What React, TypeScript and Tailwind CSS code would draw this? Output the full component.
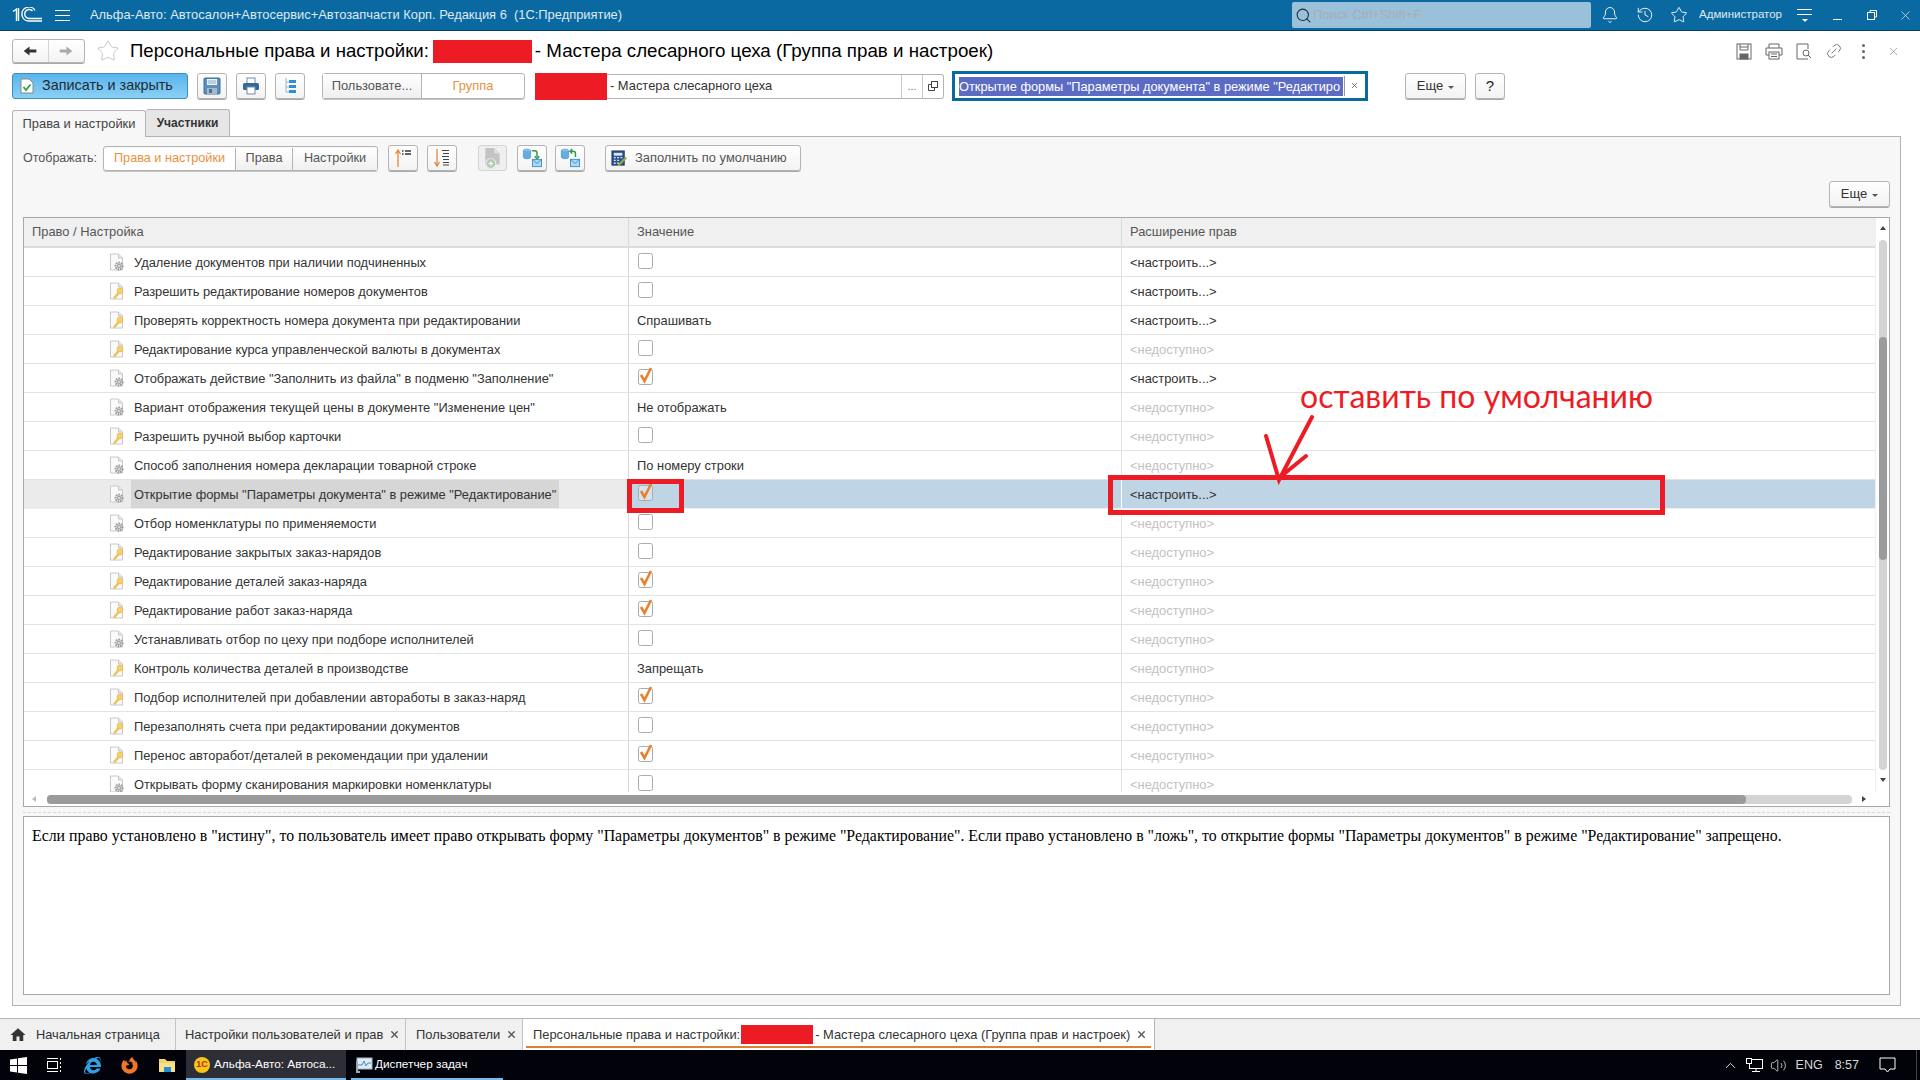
import { Bell, ChevronUp, History, Link2, Search, Star, Volume2, X } from "lucide-react";
import { FaFirefoxBrowser, FaInternetExplorer } from "react-icons/fa";
import { MdHome } from "react-icons/md";

type Row = { label: string; icon: "gear" | "key"; value: boolean | string; open: boolean };

const rows: Row[] = [
  { label: "Удаление документов при наличии подчиненных", icon: "gear", value: false, open: true },
  { label: "Разрешить редактирование номеров документов", icon: "key", value: false, open: true },
  { label: "Проверять корректность номера документа при редактировании", icon: "key", value: "Спрашивать", open: true },
  { label: "Редактирование курса управленческой валюты в документах", icon: "key", value: false, open: false },
  { label: 'Отображать действие "Заполнить из файла" в подменю "Заполнение"', icon: "gear", value: true, open: true },
  { label: 'Вариант отображения текущей цены в документе "Изменение цен"', icon: "gear", value: "Не отображать", open: false },
  { label: "Разрешить ручной выбор карточки", icon: "key", value: false, open: false },
  { label: "Способ заполнения номера декларации товарной строке", icon: "gear", value: "По номеру строки", open: false },
  { label: 'Открытие формы "Параметры документа" в режиме "Редактирование"', icon: "gear", value: true, open: true },
  { label: "Отбор номенклатуры по применяемости", icon: "gear", value: false, open: false },
  { label: "Редактирование закрытых заказ-нарядов", icon: "key", value: false, open: false },
  { label: "Редактирование деталей заказ-наряда", icon: "key", value: true, open: false },
  { label: "Редактирование работ заказ-наряда", icon: "key", value: true, open: false },
  { label: "Устанавливать отбор по цеху при подборе исполнителей", icon: "gear", value: false, open: false },
  { label: "Контроль количества деталей в производстве", icon: "key", value: "Запрещать", open: false },
  { label: "Подбор исполнителей при добавлении автоработы в заказ-наряд", icon: "key", value: true, open: false },
  { label: "Перезаполнять счета при редактировании документов", icon: "key", value: false, open: false },
  { label: "Перенос авторабот/деталей в рекомендации при удалении", icon: "key", value: true, open: false },
  { label: "Открывать форму сканирования маркировки номенклатуры", icon: "gear", value: false, open: false },
];

const btn =
  "flex items-center justify-center border border-[#b4b4b4] rounded-[3px] bg-linear-to-b from-white to-[#f3f3f3] shadow-[0_1px_0_#a8a8a8]";

function Logo1C() {
  return (
    <svg width="31" height="16" viewBox="0 0 31 16" fill="none" stroke="white" strokeWidth="1.4">
      <path d="M1 4.5 L4.5 2 V14 M6.5 1 V14" />
      <path d="M30 11.5 H17 A4.5 4.5 0 1 1 20.5 4" />
      <path d="M30 14 H17 A7 7 0 1 1 23 3.5" />
    </svg>
  );
}

function DocIcon({ kind }: { kind: "gear" | "key" }) {
  return (
    <svg width="17" height="18" viewBox="0 0 17 18" className="shrink-0">
      <path d="M1.5 1 H9.5 L13.5 5 V17 H1.5 Z" fill="#fafafa" stroke="#c8c8c8" />
      <path d="M9.5 1 V5 H13.5" fill="#e6e6e6" stroke="#c8c8c8" />
      {kind === "gear" ? (
        <>
          <circle cx="10" cy="13" r="3.4" fill="none" stroke="#9a9a9a" strokeWidth="2.2" strokeDasharray="1.6 0.9" />
          <circle cx="10" cy="13" r="2.2" fill="#a8a8a8" />
          <circle cx="10" cy="13" r="0.9" fill="#eee" />
        </>
      ) : (
        <>
          <path d="M5 16.5 L10 10.5" stroke="#eec25a" strokeWidth="2.6" />
          <circle cx="11" cy="9" r="3" fill="#f4cf6c" stroke="#e3b341" strokeWidth="0.6" />
        </>
      )}
    </svg>
  );
}

function Check({ on }: { on: boolean }) {
  return (
    <svg width="18" height="22" viewBox="0 0 18 22" className="shrink-0">
      <rect x="0.5" y="5.5" width="14" height="15" rx="2" fill="#fff" fillOpacity={on ? 0.35 : 1} stroke="#ababab" />
      {on && <path d="M3 11 L6.5 17 L13 4" fill="none" stroke="#e8812d" strokeWidth="2.6" />}
    </svg>
  );
}

function Caret() {
  return <span className="ml-[5px] mt-[2px] w-0 h-0 border-x-[3px] border-x-transparent border-t-[3px] border-t-[#555]" />;
}

function RedBlock({ w }: { w: string }) {
  return <span className={`bg-[#ed1c24] shrink-0 ${w}`} />;
}

function GridRow({ row, selected }: { row: Row; selected: boolean }) {
  return (
    <div className={`flex h-[29px] border-b ${selected ? "border-[#eeeeee]" : "border-[#e3e3e3]"} shrink-0`}>
      <div className={`w-[605px] shrink-0 flex items-center pl-[85px] border-r border-[#d9d9d9] ${selected ? "bg-[#ebebeb]" : ""}`}>
        <DocIcon kind={row.icon} />
        <span className={`ml-[7px] pl-[3px] pr-[3px] pt-px h-full flex items-center -translate-x-[2px] text-[12.85px] ${selected ? "bg-[#d6d6d6]" : ""}`}>{row.label}</span>
      </div>
      <div className={`w-[493px] shrink-0 flex items-center pl-[8px] pt-px ${selected ? "bg-[#bfd5e5] border-r border-white" : "border-r border-[#e3e3e3]"}`}>
        {typeof row.value === "string" ? row.value : <span className="pl-px -mt-[7px]"><Check on={row.value} /></span>}
      </div>
      <div className={`flex-1 flex items-center pl-[8px] pt-px ${selected ? "bg-[#bfd5e5]" : ""} ${row.open ? "text-[#333]" : "text-[#c4c0c3]"}`}>
        {row.open ? "<настроить...>" : "<недоступно>"}
      </div>
    </div>
  );
}

function VScroll() {
  return (
    <div className="w-[14px] shrink-0 flex flex-col items-center border-l border-[#f0f0f0]">
      <span className="mt-[8px] w-0 h-0 border-x-[3px] border-x-transparent border-b-[4px] border-b-[#444]" />
      <div className="mt-[10px] w-[8px] h-[530px] bg-[#d4d4d4] rounded-[4px] flex flex-col">
        <div className="mt-[97px] h-[223px] bg-[#9b9b9b] rounded-[4px]" />
      </div>
      <span className="mt-[8px] w-0 h-0 border-x-[3px] border-x-transparent border-t-[4px] border-t-[#444]" />
    </div>
  );
}

function HScroll() {
  return (
    <div className="h-[14px] flex items-center shrink-0">
      <span className="ml-[8px] w-0 h-0 border-y-[3px] border-y-transparent border-r-[4px] border-r-[#bbb]" />
      <div className="ml-[11px] w-[1805px] h-[9px] bg-[#d4d4d4] rounded-[4px]">
        <div className="w-[1699px] h-full bg-[#9b9b9b] rounded-[4px]" />
      </div>
      <span className="ml-[10px] w-0 h-0 border-y-[3px] border-y-transparent border-l-[4px] border-l-[#444]" />
    </div>
  );
}

function FloppyBlue() {
  return (
    <svg width="18" height="18" viewBox="0 0 18 18">
      <rect x="1" y="1" width="16" height="16" rx="1" fill="#5d8fbd" stroke="#3d6f9f" />
      <rect x="4" y="2" width="10" height="6" fill="#eef3f8" />
      <path d="M5 4 H13 M5 6 H13" stroke="#8aa9c6" />
      <rect x="4" y="11" width="10" height="6" fill="#a9b9c8" />
      <rect x="6" y="12" width="3" height="4" fill="#4c6f93" />
    </svg>
  );
}

function PrinterBlue() {
  return (
    <svg width="18" height="18" viewBox="0 0 18 18">
      <rect x="5" y="1" width="8" height="6" fill="#fff" stroke="#6f8da8" />
      <rect x="1" y="6" width="16" height="7" rx="1.5" fill="#356a96" />
      <rect x="5" y="10" width="8" height="7" fill="#fff" stroke="#6f8da8" />
    </svg>
  );
}

function TreeList() {
  return (
    <svg width="16" height="18" viewBox="0 0 16 18">
      <path d="M4 1 V15 M4 5 H7 M4 10 H7 M4 15 H7" stroke="#9fb3bf" fill="none" />
      <rect x="7" y="3" width="7" height="3" fill="#2f8fd0" />
      <rect x="7" y="8" width="7" height="3" fill="#2f8fd0" />
      <rect x="7" y="13" width="7" height="3" fill="#2f8fd0" />
    </svg>
  );
}

function SortIcon({ down }: { down: boolean }) {
  return (
    <svg width="18" height="20" viewBox="0 0 18 20">
      {down ? (
        <path d="M4 1 V17 M1.5 14 L4 18 L6.5 14" stroke="#e8853a" fill="none" strokeWidth="1.3" />
      ) : (
        <path d="M4 19 V3 M1.5 6 L4 2 L6.5 6" stroke="#e8853a" fill="none" strokeWidth="1.3" />
      )}
      {down ? (
        <path d="M9 2.5 H16 M10 5.5 H16 M9 8.5 H16 M10 11.5 H16 M10 14.5 H16 M10 17 H16" stroke="#444" strokeWidth="1.2" />
      ) : (
        <path d="M8 3 H9.5 M11 3 H17 M8 6 H9.5 M11 6 H17" stroke="#333" strokeWidth="1.4" />
      )}
    </svg>
  );
}

function DataMail({ back }: { back: boolean }) {
  return (
    <svg width="20" height="20" viewBox="0 0 22 22">
      <ellipse cx="5.5" cy="3" rx="4" ry="1.8" fill="#9ccff0" stroke="#3d8fc9" strokeWidth="0.7" />
      <path d="M1.5 3 V10 A4 1.8 0 0 0 9.5 10 V3" fill="#62ade3" stroke="#3d8fc9" strokeWidth="0.7" />
      <path d={back ? "M17 10 V6 A2.5 2.5 0 0 0 14.5 3.5 H11" : "M11 3 H14 A2.5 2.5 0 0 1 16.5 5.5 V10"} fill="none" stroke="#2f9a43" strokeWidth="1.6" />
      <path d={back ? "M13.5 1 L11 3.5 L13.5 6" : "M14 9 L16.5 12 L19 9"} fill="none" stroke="#2f9a43" strokeWidth="1.6" />
      <rect x="11.5" y="12.5" width="10" height="8" fill="#a9d8f3" stroke="#3d8fc9" />
      <path d="M11.5 12.5 L16.5 17 L21.5 12.5" fill="none" stroke="#3d8fc9" />
    </svg>
  );
}

function CalcIcon() {
  return (
    <svg width="17" height="17" viewBox="0 0 18 18" className="shrink-0">
      <rect x="1" y="1" width="13" height="15" fill="#2f4f8f" stroke="#22386b" />
      <rect x="3" y="3" width="9" height="3" fill="#dbe6f5" />
      <path d="M3 8 H5 M6.5 8 H8.5 M10 8 H12 M3 11 H5 M6.5 11 H8.5 M3 14 H5 M6.5 14 H8.5" stroke="#dbe6f5" strokeWidth="1.4" />
      <path d="M8 16 L16 8" stroke="#7cb342" strokeWidth="2.4" />
      <path d="M7 17.5 L8 15.5 L9.5 16.5 Z" fill="#e8b23a" />
    </svg>
  );
}

function TopBar() {
  return (
    <div className="h-[31px] shrink-0 bg-[#0a69a0] border-b border-[#073f63] flex items-center text-white">
      <div className="ml-[12px] w-[31px]"><Logo1C /></div>
      <div className="ml-[12px] w-[15px] h-[11px] border-y border-white flex items-center"><span className="w-full h-px bg-white" /></div>
      <span className="ml-[20px] text-[12.9px] text-[#dfeaf2] whitespace-pre">Альфа-Авто: Автосалон+Автосервис+Автозапчасти Корп. Редакция 6  (1С:Предприятие)</span>
      <div className="ml-auto w-[299px] h-[26px] rounded-[2px] bg-[#9ac1d9] flex items-center pl-[3px]">
        <Search size={17} strokeWidth={1.5} color="#1c3040" />
        <span className="ml-[1px] text-[12.9px] text-[#a8adb8]">Поиск Ctrl+Shift+F</span>
      </div>
      <Bell size={18} strokeWidth={1.2} className="ml-[10px]" />
      <History size={18} strokeWidth={1.2} className="ml-[17px]" />
      <Star size={18} strokeWidth={1.2} className="ml-[16px]" />
      <span className="ml-[11px] text-[11.5px] text-[#dfeaf2]">Администратор</span>
      <div className="ml-[15px] w-[15px] flex flex-col items-center gap-[4px]">
        <span className="w-full h-px bg-white" />
        <span className="w-full h-px bg-white" />
        <span className="w-0 h-0 border-x-[3px] border-x-transparent border-t-[3px] border-t-white" />
      </div>
      <span className="ml-[21px] w-[9px] h-px bg-white mt-[9px]" />
      <svg width="10" height="10" viewBox="0 0 10 10" className="ml-[25px]" fill="none" stroke="white"><rect x="0.5" y="2.5" width="7" height="7" /><path d="M3 2.5 V0.5 H9.5 V7 H7.5" /></svg>
      <X size={15} strokeWidth={1} className="ml-[21px] mr-[7px]" />
    </div>
  );
}

function TitleRow() {
  return (
    <div className="flex items-center h-[24px]">
      <div className={`${btn} w-[73px] h-[24px]`}>
        <svg width="36" height="22" viewBox="0 0 36 22" className="w-[36px]"><path d="M11 11 L17 6.5 V9.5 H24 V12.5 H17 V15.5 Z" fill="#333" /></svg>
        <span className="w-px h-full bg-[#d4d4d4]" />
        <svg width="36" height="22" viewBox="0 0 36 22" className="w-[36px]"><path d="M24 11 L18 6.5 V9.5 H11 V12.5 H18 V15.5 Z" fill="#aaa" /></svg>
      </div>
      <Star size={24} strokeWidth={0.8} color="#b9b9b9" className="ml-[11px]" />
      <span className="ml-[10px] text-[18.6px] text-black whitespace-nowrap">Персональные права и настройки:</span>
      <RedBlock w="ml-[4px] w-[99px] h-[23px]" />
      <span className="ml-[3px] text-[18.75px] text-black whitespace-nowrap">- Мастера слесарного цеха (Группа прав и настроек)</span>
      <div className="ml-auto flex items-center text-[#6b6b6b]">
        <svg width="16" height="17" viewBox="0 0 16 17" fill="none" stroke="#666"><rect x="1" y="1" width="14" height="15" /><path d="M4 1 V7 H12 V1 M4 4 H12" /><rect x="4" y="11" width="8" height="5" fill="#666" /></svg>
        <svg width="18" height="17" viewBox="0 0 18 17" fill="none" stroke="#666" className="ml-[13px]"><path d="M4 5 V1 H14 V5 M4 12 H1 V5 H17 V12 H14" /><rect x="4" y="9" width="10" height="7" /><path d="M6 11 H12 M6 13.5 H12" /></svg>
        <svg width="16" height="17" viewBox="0 0 16 17" fill="none" stroke="#666" className="ml-[13px]"><path d="M12 16 H1 V1 H12 V6" /><circle cx="10" cy="10" r="3" /><path d="M12 12 L15 15" /></svg>
        <Link2 size={18} strokeWidth={1.1} className="ml-[13px] -rotate-45" />
        <span className="ml-[19px] flex flex-col gap-[3px]">
          <span className="w-[3px] h-[3px] rounded-full bg-[#666]" />
          <span className="w-[3px] h-[3px] rounded-full bg-[#666]" />
          <span className="w-[3px] h-[3px] rounded-full bg-[#666]" />
        </span>
        <X size={13} strokeWidth={1} className="ml-[22px] mr-[1px]" />
      </div>
    </div>
  );
}

function CommandRow() {
  return (
    <div className="flex items-center h-[26px] mt-[10px]">
      <button className="w-[176px] h-[26px] rounded-[3px] border border-[#3f8dbd] bg-linear-to-b from-[#58b4ec] to-[#8ad0f6] flex items-center pl-[7px] text-[14.4px] text-[#1f2a33] whitespace-nowrap">
        <svg width="14" height="16" viewBox="0 0 14 16" className="shrink-0"><path d="M1 1 H9 L13 5 V15 H1 Z" fill="#fff" stroke="#8a8a8a" /><path d="M3.5 9 L6 12 L10.5 6.5" fill="none" stroke="#2fa33c" strokeWidth="1.8" /></svg>
        <span className="ml-[8px]">Записать и закрыть</span>
      </button>
      <div className={`${btn} ml-[9px] w-[30px] h-[26px]`}><FloppyBlue /></div>
      <div className={`${btn} ml-[9px] w-[30px] h-[26px]`}><PrinterBlue /></div>
      <div className={`${btn} ml-[9px] w-[30px] h-[26px]`}><TreeList /></div>
      <div className="ml-[17px] w-[203px] h-[26px] flex border border-[#b4b4b4] rounded-[3px] shadow-[0_1px_0_#c4c4c4]">
        <span className="w-[99px] flex items-center justify-center bg-linear-to-b from-white to-[#efefef] border-r border-[#b4b4b4] text-[#555]">Пользовате...</span>
        <span className="flex-1 flex items-center justify-center text-[#e8923e]">Группа</span>
      </div>
      <RedBlock w="ml-[10px] w-[72px] h-[27px]" />
      <div className="w-[337px] h-[25px] flex border border-l-0 border-[#b4b4b4] rounded-r-[3px] text-[#333]">
        <span className="w-[294px] flex items-center pl-[3px]">- Мастера слесарного цеха</span>
        <span className="w-[21px] flex items-center justify-center border-l border-[#c8c8c8] text-[#777] text-[11px]">...</span>
        <span className="w-[21px] flex items-center justify-center border-l border-[#c8c8c8]">
          <svg width="10" height="10" viewBox="0 0 10 10" fill="none" stroke="#444"><rect x="3.5" y="0.5" width="6" height="6" /><path d="M3.5 3.5 H0.5 V9.5 H6.5 V6.5" /></svg>
        </span>
      </div>
      <div className="ml-[8px] w-[416px] h-[30px] border-[3px] border-[#0a69a0] flex items-center pl-[4px] bg-white">
        <span className="w-[384px] shrink-0 h-[19px] bg-[#5c6bc4] text-white text-[12.8px] whitespace-nowrap leading-[19px]">Открытие формы "Параметры документа" в режиме "Редактиро</span>
        <span className="w-px h-[20px] ml-[1px] bg-[#999]" />
        <X size={9} strokeWidth={2} color="#555" className="ml-[5px] -mt-[2px]" />
      </div>
      <div className={`${btn} ml-[37px] w-[61px] h-[26px] text-[13px] text-[#333]`}>Еще<Caret /></div>
      <div className={`${btn} ml-[9px] w-[30px] h-[26px] text-[15px] text-[#222]`}>?</div>
    </div>
  );
}

function DisplayRow() {
  return (
    <div className="flex items-center h-[26px] mt-[8px] text-[12.7px]">
      <span className="text-[#555] w-[80px] text-[12.5px]">Отображать:</span>
      <div className="w-[275px] h-[25px] flex border border-[#b4b4b4] rounded-[3px] shadow-[0_1px_0_#c4c4c4] pt-px">
        <span className="w-[131px] flex items-center justify-center bg-white rounded-l-[3px] text-[#e8923e]">Права и настройки</span>
        <span className="w-[57px] flex items-center justify-center border-l border-[#b4b4b4] bg-linear-to-b from-white to-[#efefef] text-[#555]">Права</span>
        <span className="flex-1 flex items-center justify-center border-l border-[#b4b4b4] bg-linear-to-b from-white to-[#efefef] text-[#555]">Настройки</span>
      </div>
      <div className={`${btn} ml-[10px] w-[30px] h-[26px]`}><SortIcon down={false} /></div>
      <div className={`${btn} ml-[9px] w-[30px] h-[26px]`}><SortIcon down /></div>
      <div className="ml-[21px] w-[29px] h-[26px] flex items-center justify-center rounded-[3px] border border-[#d4d4d4] bg-[#efefef]">
        <svg width="20" height="22" viewBox="0 0 18 20"><path d="M2 1 H10 L15 6 V16 H2 Z" fill="#c4c4c4" /><path d="M10 1 V6 H15" fill="#dedede" /><circle cx="7" cy="15" r="4.5" fill="#b4ccb4" stroke="#e6e6e6" /><path d="M5 15 H9 M7 13 V17" stroke="#fff" /></svg>
      </div>
      <div className={`${btn} ml-[10px] w-[30px] h-[26px]`}><DataMail back={false} /></div>
      <div className={`${btn} ml-[8px] w-[30px] h-[26px]`}><DataMail back /></div>
      <div className={`${btn} ml-[20px] w-[196px] h-[26px] text-[#555] justify-start pl-[5px] text-[12.9px]`}>
        <CalcIcon />
        <span className="ml-[7px] whitespace-nowrap">Заполнить по умолчанию</span>
      </div>
    </div>
  );
}

function Grid() {
  return (
    <div className="mt-[10px] h-[590px] shrink-0 border border-[#a8a8a8] bg-white flex flex-col overflow-hidden">
      <div className="flex flex-1 min-h-0">
        <div className="w-[1851px] shrink-0 flex flex-col min-h-0">
          <div className="flex h-[30px] shrink-0 bg-[#f0f0f0] border-b-2 border-[#dcdcdc] text-[#555] items-center">
            <div className="w-[605px] h-full flex items-center pl-[8px] border-r border-[#d9d9d9]">Право / Настройка</div>
            <div className="w-[493px] h-full flex items-center pl-[8px] border-r border-[#d9d9d9]">Значение</div>
            <div className="flex-1 pl-[8px]">Расширение прав</div>
          </div>
          <div className="flex-1 min-h-0 overflow-hidden text-[#333]">
            {rows.map((r, i) => (
              <GridRow key={i} row={r} selected={i === 8} />
            ))}
          </div>
        </div>
        <VScroll />
      </div>
      <HScroll />
    </div>
  );
}

function OpenTabs() {
  return (
    <div className="h-[32px] shrink-0 bg-[#f0f0f0] border-t border-[#b4b4b4] flex text-[#333] whitespace-nowrap">
      <div className="w-[176px] flex items-center pl-[9px] border-r border-[#c4c4c4] shrink-0">
        <MdHome size={18} color="#333" />
        <span className="ml-[9px] text-[12.8px]">Начальная страница</span>
      </div>
      <div className="w-[230px] flex items-center pl-[9px] border-r border-[#c4c4c4] shrink-0">
        Настройки пользователей и прав
        <X size={11} strokeWidth={3} color="#555" className="ml-[6px]" />
      </div>
      <div className="w-[117px] flex items-center pl-[10px] border-r border-[#c4c4c4] shrink-0">
        Пользователи
        <X size={11} strokeWidth={3} color="#555" className="ml-[6px]" />
      </div>
      <div className="w-[632px] shrink-0 bg-white border-r border-[#b4b4b4] flex items-center pl-[10px] relative">
        <span>Персональные права и настройки:</span>
        <RedBlock w="ml-[1px] w-[72px] h-[19px]" />
        <span className="ml-[2px]">- Мастера слесарного цеха (Группа прав и настроек)</span>
        <X size={11} strokeWidth={3} color="#555" className="ml-[6px]" />
        <span className="absolute left-[3px] right-[3px] bottom-[2px] h-[2px] bg-[#dd7f2e]" />
      </div>
    </div>
  );
}

function Taskbar() {
  return (
    <div className="h-[30px] shrink-0 bg-[#02030a] flex items-center text-white text-[11.8px] whitespace-nowrap">
      <svg width="17" height="17" viewBox="0 0 17 17" className="ml-[10px]" fill="white"><path d="M0 2.4 L7 1.4 V8 H0 Z M8 1.2 L17 0 V8 H8 Z M0 9 H7 V15.6 L0 14.6 Z M8 9 H17 V17 L8 15.8 Z" /></svg>
      <svg width="16" height="16" viewBox="0 0 16 16" className="ml-[19px]" fill="none" stroke="white"><rect x="1.5" y="4.5" width="10" height="7" /><path d="M1 1.5 H12 M1 14.5 H12 M14.5 1 V3 M14.5 5 V7 M14.5 9 V11 M14.5 13 V15" /></svg>
      <FaInternetExplorer size={17} color="#2f9fe6" className="ml-[22px]" />
      <FaFirefoxBrowser size={17} color="#f0762a" className="ml-[20px]" />
      <svg width="16" height="16" viewBox="0 0 16 16" className="ml-[21px]"><path d="M0 2 H6 L8 4 H16 V15 H0 Z" fill="#f3d36b" /><rect x="0" y="6" width="16" height="9" fill="#f8e08a" /><rect x="5" y="10" width="7" height="5" fill="#1f8fd6" /></svg>
      <div className="ml-[11px] w-[160px] h-full bg-[#2e2f36] border-b-2 border-[#76b9ed] flex items-center pl-[8px] pt-[2px] shrink-0">
        <span className="w-[16px] h-[16px] rounded-full bg-[#f5c518] flex items-center justify-center text-[9px] font-bold text-[#c0281c] shrink-0">1С</span>
        <span className="ml-[4px]">Альфа-Авто: Автоса...</span>
      </div>
      <div className="ml-[5px] w-[152px] h-full border-b-2 border-[#76b9ed] flex items-center pl-[4px] pt-[2px] shrink-0">
        <svg width="18" height="18" viewBox="0 0 18 18" className="shrink-0"><rect x="2" y="2" width="15" height="11" fill="#dfeaf5" stroke="#a7b6c4" /><path d="M3 9 L7 9 L9 5 L11 10 L13 7 L16 7" stroke="#3f8fd0" fill="none" /><path d="M1 5 V17 H5 V15 H3 V5 Z" fill="#9ba7b0" /></svg>
        <span className="ml-[2px]">Диспетчер задач</span>
      </div>
      <ChevronUp size={17} strokeWidth={1.2} className="ml-auto" />
      <svg width="17" height="15" viewBox="0 0 17 15" className="ml-[7px]" fill="none" stroke="white"><rect x="3.5" y="1.5" width="13" height="9" /><rect x="0.5" y="0.5" width="5" height="5" fill="#02030a" /><path d="M10 10.5 V13.5 M6 13.5 H14" /></svg>
      <Volume2 size={17} strokeWidth={1} className="ml-[7px]" />
      <span className="ml-[9px] text-[#d8d8d8] text-[12.5px]">ENG</span>
      <span className="ml-[12px] text-[#d8d8d8] text-[12.5px]">8:57</span>
      <svg width="17" height="16" viewBox="0 0 17 16" className="ml-[20px]" fill="none" stroke="white"><path d="M1 1 H16 V12 H11 L8.5 15 L6 12 H1 Z" /></svg>
      <span className="ml-[20px] mr-[3px] w-px h-full bg-[#444]" />
    </div>
  );
}

export default function App() {
  return (
    <div className="relative w-[1920px] h-[1080px] overflow-hidden flex flex-col bg-white font-['Liberation_Sans',Arial,sans-serif] text-[12.9px]">
      <TopBar />
      <div className="flex-1 min-h-0 flex flex-col px-[12px] pt-[8px] pr-[19px]">
        <TitleRow />
        <CommandRow />
        <div className="flex mt-[10px] h-[27px] shrink-0">
          <div className="w-[134px] flex items-center justify-center pb-px bg-[#f7f7f7] border border-b-0 border-[#b4b4b4] rounded-t-[3px] text-[#444] relative top-px z-10">Права и настройки</div>
          <div className="w-[84px] flex items-center justify-center bg-[#e6e6e6] border border-l-0 border-b-0 border-[#b4b4b4] rounded-t-[3px] font-bold text-[12px] text-[#333]">Участники</div>
        </div>
        <div className="h-[870px] shrink-0 bg-[#f7f7f7] border border-[#b4b4b4] px-[10px] flex flex-col">
          <DisplayRow />
          <div className="flex justify-end mt-[10px] h-[26px]">
            <div className={`${btn} w-[61px] h-[26px] text-[13px] text-[#333]`}>Еще<Caret /></div>
          </div>
          <Grid />
          <div className="mt-[5px] border-t border-dashed border-[#d8d8d8]" />
          <div className="mt-[3px] h-[179px] shrink-0 border border-[#a8a8a8] bg-white pl-[8px] pt-[7px] font-['Liberation_Serif',serif] text-[15.85px] text-black whitespace-nowrap">
            Если право установлено в "истину", то пользователь имеет право открывать форму "Параметры документов" в режиме "Редактирование". Если право установлено в "ложь", то открытие формы "Параметры документов" в режиме "Редактирование" запрещено.
          </div>
        </div>
      </div>
      <OpenTabs />
      <Taskbar />

      {/* пометки поверх скриншота */}
      <div className="absolute left-[627px] top-[479px] w-[57px] h-[34px] border-[5px] border-[#ed1c24]" />
      <div className="absolute left-[1108px] top-[475px] w-[557px] h-[40px] border-[5px] border-[#ed1c24]" />
      <span className="absolute left-[1300px] top-[376px] font-['Lato',sans-serif] text-[32px] leading-[40px] text-[#ed1c24] whitespace-nowrap">оставить по умолчанию</span>
      <svg width="70" height="80" viewBox="0 0 70 80" className="absolute left-[1255px] top-[410px]" fill="none" stroke="#ed1c24" strokeWidth="4" strokeLinecap="round">
        <path d="M57 7 L24 70 L11 26 M24 68 L51 46" />
      </svg>
    </div>
  );
}
